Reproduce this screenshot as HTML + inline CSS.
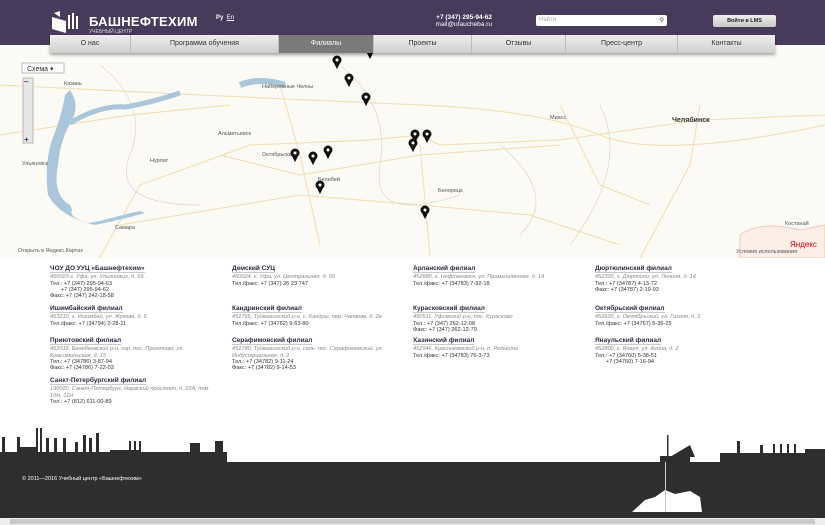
<!DOCTYPE html>
<html><head><meta charset="utf-8"><style>
*{margin:0;padding:0;box-sizing:border-box}
body{width:825px;height:525px;overflow:hidden;background:#fff;font-family:"Liberation Sans",sans-serif;position:relative}
.hdr{position:absolute;left:0;top:0;width:825px;height:45px;background:#483a5a}
.logo{position:absolute;left:50px;top:11px;color:#fff}
.logo b{position:absolute;left:39px;top:3px;font-size:13px;letter-spacing:.3px;white-space:nowrap}
.logo i{position:absolute;left:39px;top:18px;font-size:5px;font-style:normal;white-space:nowrap;color:#ddd}
.lang{position:absolute;left:216px;top:15px;color:#fff;font-size:6px;font-weight:bold}
.ph{position:absolute;left:410px;top:14px;color:#fff;font-size:6.5px;text-align:right;width:82px;line-height:7px}
.srch{position:absolute;left:536px;top:15px;width:131px;height:11px;background:#fff;border-radius:2px;font-size:6px;color:#aaa;padding:2px 3px}
.lms{position:absolute;left:713px;top:15px;width:63px;height:12px;background:linear-gradient(#eee,#c8c8c8);border-radius:2px;font-size:5.5px;text-align:center;line-height:12px;color:#222;font-weight:bold}
.nav{position:absolute;left:50px;top:35px;width:725px;height:18px;background:linear-gradient(#eee,#cfcfcf);display:flex;box-shadow:0 2px 3px rgba(0,0,0,.35);z-index:3}
.nav div{font-size:7px;color:#333;text-align:center;line-height:18px;border-right:1px solid #bbb}
.nav .a{background:#7a7a7a;color:#fff}
.map{position:absolute;left:0;top:45px;width:825px;height:213px;background:#fbfaf4;overflow:hidden}
.cols{position:absolute;top:266px;font-size:5.6px;line-height:6.3px;color:#333}
.cols h4{font-size:6.5px;color:#2a2a45;border-bottom:1px solid #c8c8d0;display:inline-block;margin-bottom:1px}
.cols .ad{color:#888;font-style:italic}
.blk{height:40px}
.blk.s{height:32px}
.ft{position:absolute;left:0;top:462px;width:825px;height:56px;background:#2e2e2e}
.sb{position:absolute;left:0;top:518px;width:825px;height:7px;background:#eee}
.sb div{position:absolute;left:10px;top:1px;width:805px;height:5px;background:#c8c8c8}
</style></head><body>
<div class="hdr">
<div class="logo"><svg width="32" height="22" viewBox="0 0 32 22"><path d="M2 6 L16 10 L16 22 L2 18Z" fill="#fff"/><rect x="18" y="4" width="2" height="14" fill="#fff"/><rect x="22" y="2" width="2" height="16" fill="#fff"/><rect x="26" y="5" width="2" height="13" fill="#fff"/><path d="M4 2 L10 6 L10 0Z" fill="#fff"/></svg><b>БАШНЕФТЕХИМ</b><i>УЧЕБНЫЙ ЦЕНТР</i></div>
<div class="lang">Ру &nbsp;<span style="font-weight:normal;text-decoration:underline">En</span></div>
<div class="ph"><b>+7 (347) 295-94-62</b><br>mail@ufaucheba.ru</div>
<div class="srch">Найти<span style="float:right;color:#333">&#9906;</span></div>
<div class="lms">Войти в LMS</div>
</div>
<div class="nav">
<div style="width:81px">О нас</div><div style="width:148px">Программа обучения</div><div class="a" style="width:95px">Филиалы</div><div style="width:98px">Проекты</div><div style="width:94px">Отзывы</div><div style="width:112px">Пресс-центр</div><div style="width:97px;border:0">Контакты</div>
</div>
<div class="map"><svg width="825" height="213">
<g fill="none" stroke="#f3dcb0" stroke-width="1">
<path d="M0 40 Q100 45 200 50 T420 60 T600 90 T825 80"/><path d="M90 230 L140 140 L250 100 L370 95 L420 90 L440 100 L560 95 L700 75 L825 70"/><path d="M220 110 L300 130 L420 110 L560 100"/><path d="M120 180 L300 150 L420 160 L530 170 L620 200"/><path d="M280 40 L300 110 L320 200"/><path d="M420 100 L430 210"/><path d="M700 60 L690 120 L640 213"/><path d="M560 60 L600 140 L650 160"/><path d="M0 90 L130 70 L230 60"/></g>
<g fill="none" stroke="#dedad0" stroke-width=".8"><path d="M340 20 Q390 60 380 120 T460 150"/><path d="M500 100 Q560 150 520 190"/><path d="M600 60 Q630 120 570 200"/><path d="M100 20 Q150 60 130 110 T200 160"/></g>
<path d="M70 45 Q80 60 72 75 Q60 95 58 120 Q52 150 70 160 L72 165 Q68 172 88 178 L100 176 Q130 168 140 166 L145 168 Q120 175 95 180 Q60 172 48 150 Q44 120 52 95 Q62 70 65 50Z" fill="#aac6db"/>
<path d="M70 78 Q100 60 125 62 Q150 58 180 48" stroke="#aac6db" stroke-width="5" fill="none"/>
<path d="M240 40 Q260 32 285 40" stroke="#aac6db" stroke-width="6" fill="none"/>
<path d="M740 190 Q760 175 800 185 L825 180 L825 213 L740 213Z" fill="#fbeee6" stroke="#f2c8c0"/>
<g font-size="5.5" fill="#555" font-family="Liberation Sans">
<text x="64" y="40">Казань</text><text x="22" y="120">Ульяновск</text><text x="115" y="184">Самара</text><text x="262" y="43">Набережные Челны</text><text x="218" y="90">Альметьевск</text><text x="150" y="117">Нурлат</text><text x="262" y="111">Октябрьский</text><text x="318" y="136">Белебей</text><text x="438" y="147">Белорецк</text><text x="550" y="74">Миасс</text><text x="672" y="77" font-size="7" fill="#333" font-weight="bold">Челябинск</text><text x="785" y="180">Костанай</text><text x="18" y="207">Открыть в Яндекс.Картах</text><text x="736" y="208">Условия использования</text><text x="790" y="202" fill="#d00" font-size="8">Яндекс</text></g>
<rect x="22" y="18" width="42" height="10" fill="#fff" stroke="#bbb"/><text x="27" y="26" font-size="7" fill="#333">Схема ▾</text>
<rect x="23" y="33" width="10" height="65" fill="#e6e6e6" stroke="#bbb"/><text x="24" y="39" font-size="8">–</text><text x="24" y="97" font-size="8">+</text>
<g fill="#111" stroke="#111">
<g transform="translate(337,15)"><circle r="4"/><path d="M-3 2 L0 8 L3 2Z"/></g>
<g transform="translate(349,33)"><circle r="4"/><path d="M-3 2 L0 8 L3 2Z"/></g>
<g transform="translate(366,52)"><circle r="4"/><path d="M-3 2 L0 8 L3 2Z"/></g>
<g transform="translate(415,89)"><circle r="4"/><path d="M-3 2 L0 8 L3 2Z"/></g>
<g transform="translate(427,89)"><circle r="4"/><path d="M-3 2 L0 8 L3 2Z"/></g>
<g transform="translate(413,98)"><circle r="4"/><path d="M-3 2 L0 8 L3 2Z"/></g>
<g transform="translate(295,108)"><circle r="4"/><path d="M-3 2 L0 8 L3 2Z"/></g>
<g transform="translate(313,111)"><circle r="4"/><path d="M-3 2 L0 8 L3 2Z"/></g>
<g transform="translate(328,105)"><circle r="4"/><path d="M-3 2 L0 8 L3 2Z"/></g>
<g transform="translate(320,140)"><circle r="4"/><path d="M-3 2 L0 8 L3 2Z"/></g>
<g transform="translate(425,165)"><circle r="4"/><path d="M-3 2 L0 8 L3 2Z"/></g>
<g transform="translate(370,5)"><path d="M-3 2 L0 8 L3 2Z"/></g>
</g>
<g fill="#fff"><circle cx="337" cy="15" r="1.5"/><circle cx="349" cy="33" r="1.5"/><circle cx="366" cy="52" r="1.5"/><circle cx="415" cy="89" r="1.5"/><circle cx="427" cy="89" r="1.5"/><circle cx="413" cy="98" r="1.5"/><circle cx="295" cy="108" r="1.5"/><circle cx="313" cy="111" r="1.5"/><circle cx="328" cy="105" r="1.5"/><circle cx="320" cy="140" r="1.5"/><circle cx="425" cy="165" r="1.5"/></g>
</svg></div>

<div class="cols" style="left:50px;width:170px">
<div class="blk"><h4>ЧОУ ДО УУЦ «Башнефтехим»</h4><div class="ad">450029 г. Уфа, ул. Ульяновых, д. 65</div>Тел.: +7 (347) 295-94-63<br>&nbsp;&nbsp;&nbsp;&nbsp;&nbsp;&nbsp;&nbsp;+7 (347) 295-94-62<br>Факс: +7 (347) 242-18-58</div>
<div class="blk s"><h4>Ишимбайский филиал</h4><div class="ad">453210, г. Ишимбай, ул. Жукова, д. 5</div>Тел./факс: +7 (34794) 2-28-11</div>
<div class="blk"><h4>Приютовский филиал</h4><div class="ad">452018, Белебеевский р-н, гор. пос. Приютово, ул. Комсомольская, д. 15</div>Тел.: +7 (34786) 3-87-94<br>Факс: +7 (34786) 7-22-03</div>
<div class="blk"><h4>Санкт-Петербургский филиал</h4><div class="ad">190020, Санкт-Петербург, Нарвский проспект, д. 22А, пом. 10Н, 11Н</div>Тел.: +7 (812) 611-00-89</div>
</div>
<div class="cols" style="left:232px;width:160px">
<div class="blk"><h4>Демский СУЦ</h4><div class="ad">450024, г. Уфа, ул. Центральная, д. 59</div>Тел./факс: +7 (347) 26 23 747</div>
<div class="blk s"><h4>Кандринский филиал</h4><div class="ad">452765, Туймазинский р-н, с. Кандры, пер. Чапаева, д. 2а</div>Тел./факс: +7 (34782) 9-63-80</div>
<div class="blk"><h4>Серафимовский филиал</h4><div class="ad">452780, Туймазинский р-н, сель. пос. Серафимовский, ул. Индустриальная, д. 2</div>Тел.: +7 (34782) 9-11-24<br>Факс: +7 (34782) 9-14-53</div>
</div>
<div class="cols" style="left:413px;width:175px">
<div class="blk"><h4>Арланский филиал</h4><div class="ad">452680, г. Нефтекамск, ул. Промышленная, д. 14</div>Тел./факс: +7 (34783) 7-92-18</div>
<div class="blk s"><h4>Курасковский филиал</h4><div class="ad">450511, Уфимский р-н, пос. Курасково</div>Тел.: +7 (347) 262-12-08<br>Факс: +7 (347) 262-12-79</div>
<div class="blk"><h4>Хазинский филиал</h4><div class="ad">452946, Краснокамский р-н, п. Редькино</div>Тел./факс: +7 (34783) 76-3-73</div>
</div>
<div class="cols" style="left:595px;width:175px">
<div class="blk"><h4>Дюртюлинский филиал</h4><div class="ad">452320, г. Дюртюли, ул. Ленина, д. 14</div>Тел.: +7 (34787) 4-13-72<br>Факс: +7 (34787) 2-19-93</div>
<div class="blk s"><h4>Октябрьский филиал</h4><div class="ad">452620, г. Октябрьский, ул. Гоголя, д. 1</div>Тел./факс: +7 (34767) 5-36-25</div>
<div class="blk"><h4>Янаульский филиал</h4><div class="ad">452800, г. Янаул, ул. Азина, д. 2</div>Тел.: +7 (34760) 5-38-51<br>&nbsp;&nbsp;&nbsp;&nbsp;&nbsp;&nbsp;&nbsp;+7 (34760) 7-16-94</div>
</div>

<svg style="position:absolute;left:0;top:425px" width="825" height="40"><g fill="#2e2e2e">
<rect x="0" y="27" width="227" height="13"/><rect x="2" y="12" width="3" height="20"/><rect x="17" y="12" width="3" height="20"/><rect x="36" y="3" width="2" height="30"/><rect x="40" y="3" width="2" height="30"/><rect x="46" y="13" width="3" height="20"/><rect x="54" y="13" width="3" height="20"/><rect x="63" y="13" width="3" height="20"/><rect x="75" y="17" width="3" height="20"/><rect x="83" y="10" width="3" height="25"/><rect x="89" y="13" width="3" height="25"/><rect x="96" y="8" width="3" height="30"/><rect x="110" y="25" width="30" height="10"/><rect x="129" y="16" width="2" height="20"/><rect x="134" y="16" width="2" height="20"/><rect x="139" y="16" width="2" height="20"/><rect x="190" y="18" width="10" height="20"/><rect x="215" y="16" width="8" height="22"/><rect x="20" y="22" width="18" height="10"/>
<rect x="660" y="31" width="30" height="9"/><rect x="720" y="28" width="105" height="12"/><rect x="737" y="16" width="3" height="20"/><rect x="760" y="20" width="3" height="20"/><rect x="773" y="19" width="2" height="20"/><rect x="780" y="19" width="2" height="20"/><rect x="787" y="19" width="2" height="20"/><rect x="794" y="19" width="2" height="20"/><rect x="805" y="24" width="20" height="16"/>
<path d="M670 32 L690 20 L695 32Z"/><rect x="667" y="10" width="1.5" height="30"/>
</g><rect x="228" y="37" width="430" height="3" fill="#2e2e2e"/></svg>
<div class="ft"><div style="position:absolute;left:22px;top:14px;color:#fff;font-size:5.5px">© 2011—2016 Учебный центр «Башнефтехим»</div>
<svg style="position:absolute;left:630px;top:0" width="80" height="55"><path d="M2 50 L15 38 L25 35 L35 28 L45 32 L60 29 L70 35 L72 50Z" fill="#fff"/><rect x="35" y="0" width="1" height="50" fill="#ccc"/></svg></div>
<div class="sb"><div></div></div>
</body></html>
